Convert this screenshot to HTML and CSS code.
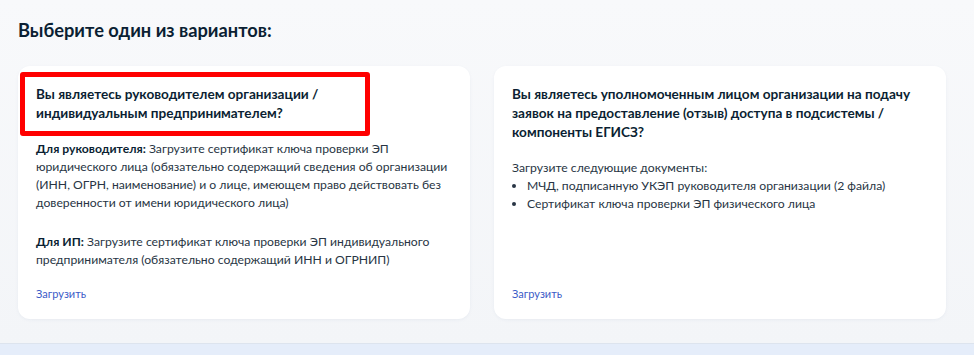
FILE: index.html
```html
<!DOCTYPE html>
<html lang="ru">
<head>
<meta charset="utf-8">
<link rel="stylesheet" href="styles.css">
</head>
<body>
<div class="page">
  <main class="main">
    <h1 class="title">Выберите один из вариантов:</h1>
    <div class="cards">
      <section class="card">
        <h2 class="card-title">Вы являетесь руководителем организации /<br>индивидуальным предпринимателем?</h2>
        <p class="text"><b>Для руководителя:</b> Загрузите сертификат ключа проверки ЭП юридического лица (обязательно содержащий сведения об организации (ИНН, ОГРН, наименование) и о лице, имеющем право действовать без доверенности от имени юридического лица)</p>
        <p class="text text-gap"><b>Для ИП:</b> Загрузите сертификат ключа проверки ЭП индивидуального предпринимателя (обязательно содержащий ИНН и ОГРНИП)</p>
        <a class="link" href="#">Загрузить</a>
        <div class="highlight"></div>
      </section>
      <section class="card">
        <h2 class="card-title">Вы являетесь уполномоченным лицом организации на подачу заявок на предоставление (отзыв) доступа в подсистемы / компоненты ЕГИСЗ?</h2>
        <p class="text">Загрузите следующие документы:</p>
        <ul class="list">
          <li>МЧД, подписанную УКЭП руководителя организации (2 файла)</li>
          <li>Сертификат ключа проверки ЭП физического лица</li>
        </ul>
        <a class="link" href="#">Загрузить</a>
      </section>
    </div>
  </main>
  <div class="footer-band"></div>
</div>
</body>
</html>
```

FILE: styles.css
```css
* { box-sizing: border-box; }
html, body {
  margin: 0;
  padding: 0;
  height: 100%;
}
body {
  font-family: Lato, "Noto Sans", sans-serif;
  color: #0b1f33;
  background: #f4f6f9;
}
.page {
  display: flex;
  flex-direction: column;
  height: 355px;
  overflow: hidden;
}
.main {
  height: 343px;
  padding: 18px 28px 0 18px;
  background: linear-gradient(180deg, #f8f9fb 0%, #f3f5f8 100%);
}
.title {
  margin: 0;
  font-size: 18.3px;
  line-height: 24px;
  font-weight: 700;
  color: #0b1f33;
}
.cards {
  margin-top: 24px;
  display: grid;
  grid-template-columns: 452px 452px;
  gap: 24px;
}
.card {
  position: relative;
  height: 253px;
  background: #ffffff;
  border-radius: 12px;
  padding: 19px 14px 18px 18px;
  display: flex;
  flex-direction: column;
  box-shadow: 0 1px 3px rgba(160, 175, 200, 0.12);
}
.card-title {
  margin: 0;
  font-size: 13.6px;
  line-height: 19px;
  font-weight: 700;
  color: #0b1f33;
}
.text {
  margin: 17px 0 0;
  font-size: 12.2px;
  line-height: 18px;
  color: #283544;
}
.text b {
  font-weight: 700;
  color: #0b1f33;
}
.text-gap {
  margin-top: 21px;
}
.list {
  margin: 0;
  padding-left: 15px;
  font-size: 12.2px;
  line-height: 18px;
  color: #283544;
}
.link {
  margin-top: auto;
  font-size: 11px;
  line-height: 14px;
  color: #3a5bc7;
  text-decoration: none;
  align-self: flex-start;
}
.highlight {
  position: absolute;
  left: 2px;
  top: 6px;
  width: 350px;
  height: 64px;
  border: 5px solid #ff0000;
  border-radius: 3px;
  pointer-events: none;
}
.footer-band {
  height: 12px;
  background: #e5edfa;
  border-top: 1px solid #dde4ee;
}
```
